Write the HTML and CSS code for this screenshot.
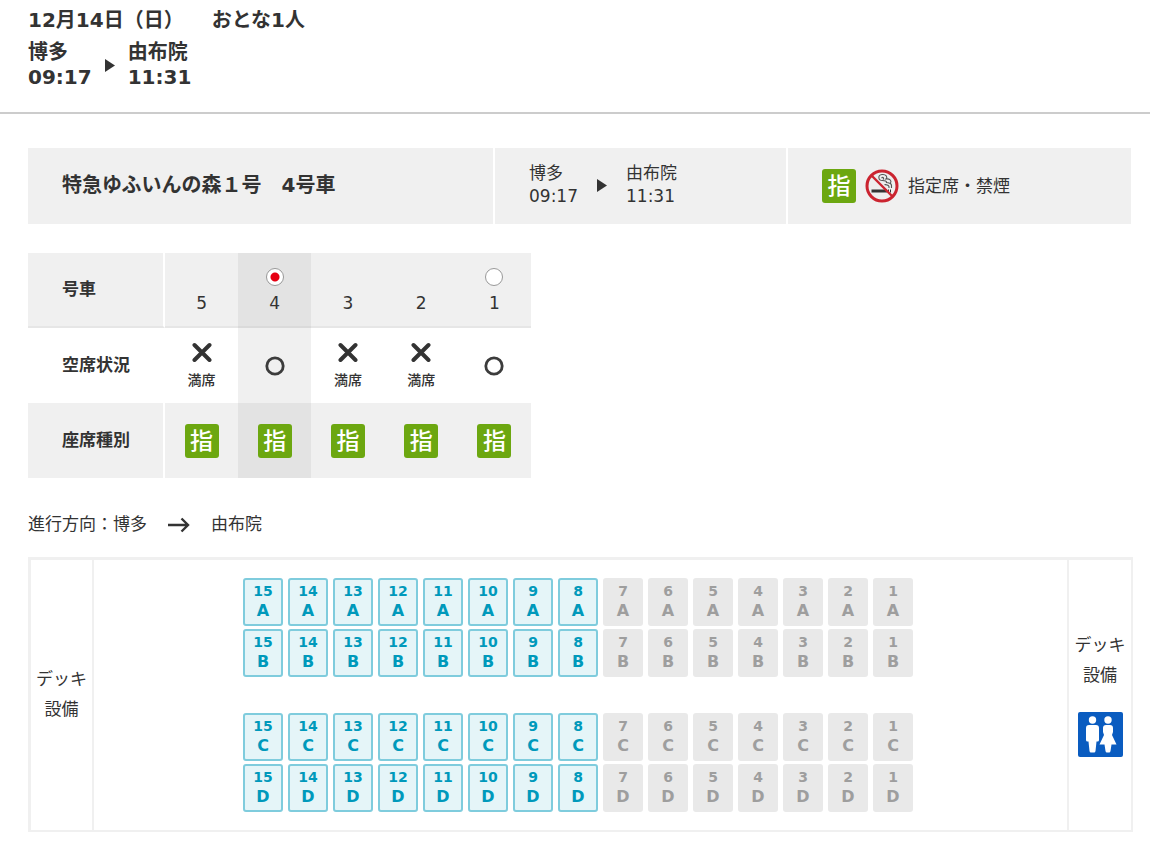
FILE: index.html
```
<!DOCTYPE html>
<html lang="ja">
<head>
  <meta charset="UTF-8">
  <meta name="viewport" content="width=device-width, initial-scale=1.0">
  <title>座席選択</title>
  <link rel="stylesheet" href="styles.css">
</head>
<body>
  <!-- shared icons -->
  <svg class="sprite" aria-hidden="true">
    <symbol id="tri" viewBox="0 0 10 13"><path d="M0 0L10 6.5L0 13Z" fill="#333"/></symbol>
    <symbol id="full" viewBox="0 0 20 20"><path d="M2.5 3L17.5 18M17.5 3L2.5 18" stroke="#333" stroke-width="4" stroke-linecap="round"/></symbol>
    <symbol id="free" viewBox="0 0 20 20"><circle cx="10" cy="10" r="8.2" fill="none" stroke="#3c3c3c" stroke-width="2.8"/></symbol>
  </svg>

  <header class="header">
    <div class="summary"><span>12月14日（日）</span><span>おとな1人</span></div>
    <div class="route">
      <div>博多<br>09:17</div>
      <svg class="tri"><use href="#tri"/></svg>
      <div>由布院<br>11:31</div>
    </div>
  </header>

  <main>
    <div class="train">
      <h2 class="train-name">特急ゆふいんの森１号　4号車</h2>
      <div class="route small">
        <div>博多<br>09:17</div>
        <svg class="tri"><use href="#tri"/></svg>
        <div>由布院<br>11:31</div>
      </div>
      <div class="train-type">
        <span class="badge">指</span>
        <svg class="nosmoking" viewBox="0 0 34 34" aria-hidden="true">
          <circle cx="17" cy="17" r="15" fill="#eeeeee"/>
          <path d="M6.5 20.5H22V23.5H6.5ZM23 20.5H24V23.5H23ZM25 20.5H26V23.5H25Z" fill="#333"/>
          <path d="M26.500 19V16.500C26.500 13.500 24 14 21.500 13.500C22 12 20 11.500 17.500 11.500C13 11.500 12.500 6 17 5.500C21 5 23 8 21 10C24.500 9.500 27 11.500 25.500 14" fill="none" stroke="#555" stroke-width="1.1"/>
          <path d="M24 19C24.500 16 22.500 16 19.500 15.500M16.500 9C18 7.500 19.500 9 18 10.500" fill="none" stroke="#555" stroke-width="1.1"/>
          <circle cx="17" cy="17" r="15" fill="none" stroke="#cb2430" stroke-width="3"/>
          <path d="M6.500 6.500L27.500 27.500" stroke="#cb2430" stroke-width="2.4"/>
        </svg>
        <span class="type-text">指定席・禁煙</span>
      </div>
    </div>

    <table class="cars">
      <tr>
        <th scope="row">号車</th>
        <td>5</td>
        <td class="current"><input type="radio" name="car" id="car4" checked><label for="car4">4</label></td>
        <td>3</td>
        <td>2</td>
        <td><input type="radio" name="car" id="car1"><label for="car1">1</label></td>
      </tr>
      <tr>
        <th scope="row">空席状況</th>
        <td><svg class="mark"><use href="#full"/></svg><span class="full">満席</span></td>
        <td class="current"><svg class="mark"><use href="#free"/></svg></td>
        <td><svg class="mark"><use href="#full"/></svg><span class="full">満席</span></td>
        <td><svg class="mark"><use href="#full"/></svg><span class="full">満席</span></td>
        <td><svg class="mark"><use href="#free"/></svg></td>
      </tr>
      <tr>
        <th scope="row">座席種別</th>
        <td><span class="badge">指</span></td>
        <td class="current"><span class="badge">指</span></td>
        <td><span class="badge">指</span></td>
        <td><span class="badge">指</span></td>
        <td><span class="badge">指</span></td>
      </tr>
    </table>

    <div class="direction">
      <span>進行方向：博多</span>
      <svg class="arrow" viewBox="0 0 22 16" aria-hidden="true"><path d="M0 8H20M13.5 1.5L20 8L13.5 14.5" fill="none" stroke="#333" stroke-width="2.4"/></svg>
      <span>由布院</span>
    </div>

    <div class="map">
      <div class="deck">デッキ<br>設備</div>
      <div class="seats" id="seats"></div>
      <div class="deck">
        デッキ<br>設備
        <svg class="toilet" viewBox="0 0 45 45" role="img" aria-label="トイレ">
          <rect width="45" height="45" rx="2" fill="#0a5cc0"/>
          <g fill="#fff">
            <circle cx="14.500" cy="8" r="3.700"/>
            <path d="M11 13H18Q21 13 21 16V28Q21 29.500 19.500 29.500H18.500L17.500 39Q17.300 40.500 16 40.500H13Q11.700 40.500 11.500 39L10.500 29.500H9.500Q8 29.500 8 28V16Q8 13 11 13Z"/>
            <circle cx="30" cy="8" r="3.700"/>
            <path d="M28 13H32Q35 13 35 16V20L34 23L38.500 32.500H33.500L32.500 39Q32.300 40.500 31 40.500H29Q27.700 40.500 27.500 39L26.500 32.500H21.500L26 23L25 20V16Q25 13 28 13Z"/>
          </g>
        </svg>
      </div>
    </div>
  </main>

  <script>
    const seats = document.getElementById('seats');
    // rows 8 to 15 are still available
    for (const letter of ['A', 'B', 'C', 'D']) {
      const row = document.createElement('div');
      row.className = letter === 'C' ? 'seat-row aisle' : 'seat-row';
      for (let n = 15; n >= 1; n--) {
        const seat = document.createElement('button');
        seat.type = 'button';
        seat.className = 'seat';
        seat.disabled = n < 8;
        seat.innerHTML = `<span class="num">${n}</span><span class="letter">${letter}</span>`;
        row.appendChild(seat);
      }
      seats.appendChild(row);
    }
  </script>
</body>
</html>
```

FILE: styles.css
```
* {
  box-sizing: border-box;
}
body {
  margin: 0;
  font-family: "DejaVu Sans", "Noto Sans CJK JP", sans-serif;
  font-size: 17px;
  color: #333;
  background: #fff;
}
.sprite {
  display: none;
}
.header {
  padding: 8px 28px 22px;
  border-bottom: 2px solid #ccc;
  font-size: 20px;
  line-height: 25px;
  font-weight: bold;
}
.summary {
  display: flex;
  gap: 28px;
  margin-bottom: 7px;
}
.route {
  display: flex;
  align-items: center;
  gap: 13px;
}
.tri {
  width: 10px;
  height: 13px;
}
main {
  padding: 34px 17px 12px 28px;
}

/* train info */
.train {
  display: grid;
  grid-template-columns: 465fr 291fr 343fr;
  gap: 2px;
  margin-right: 2px;
}
.train > * {
  display: flex;
  align-items: center;
  min-height: 76px;
  margin: 0;
  padding: 0 34px;
  background: #f0f0f0;
}
.train .train-name {
  padding-bottom: 2px;
  font-size: 20px;
  line-height: 25px;
}
.train .small {
  gap: 19px;
  padding-bottom: 2px;
  line-height: 23px;
}
.train-type {
  gap: 9px;
}
.type-text {
  padding-bottom: 4px;
}
.badge {
  display: inline-block;
  width: 34px;
  height: 34px;
  border-radius: 3px;
  background: #6ca710;
  color: #fff;
  font-size: 23px;
  font-weight: 500;
  line-height: 34px;
  text-align: center;
  vertical-align: middle;
}
.nosmoking {
  width: 34px;
  height: 34px;
}

/* car list */
.cars {
  width: 503px;
  margin-top: 29px;
  border-spacing: 0;
  table-layout: fixed;
  line-height: 22px;
}
.cars th {
  width: 137px;
  padding: 0 0 2px 34px;
  border-right: 2px solid #fff;
  text-align: left;
}
.cars td {
  height: 75px;
  padding: 0;
  text-align: center;
}
.cars th, .cars td {
  background: #f0f0f0;
  background-clip: padding-box;
}
.cars td.current {
  background: #e3e3e3;
}
.cars tr:nth-child(2) th, .cars tr:nth-child(2) td {
  background: #fff;
}
.cars tr:nth-child(2) td.current {
  background: #f0f0f0;
}
.cars tr:first-child th, .cars tr:first-child td {
  border-bottom: 2px solid #e6e6e6;
}
.cars tr:first-child td {
  padding-bottom: 12px;
  vertical-align: bottom;
}
.cars tr:first-child td.current {
  border-bottom-color: #dadada;
}
.cars label {
  display: block;
}
.cars input {
  appearance: none;
  display: block;
  width: 18px;
  height: 18px;
  margin: 0 auto 6px;
  border: 1px solid #999;
  border-radius: 50%;
  background: #fff;
}
.cars input:checked {
  background: radial-gradient(circle, #e60012 4px, #fff 5px);
}
.mark {
  display: block;
  width: 20px;
  height: 20px;
  margin: 0 auto;
}
.full {
  display: block;
  margin-top: 8px;
  font-size: 14px;
  font-weight: 500;
  line-height: 20px;
}

.direction {
  display: flex;
  align-items: center;
  gap: 21px;
  margin: 34px 0 20px;
  line-height: 25px;
}
.arrow {
  width: 22px;
  height: 16px;
}

/* seat map */
.map {
  display: flex;
  border: 2px solid #f0f0f0;
  border-width: 3px 2px 2px 3px;
}
.deck {
  display: flex;
  flex: none;
  flex-direction: column;
  justify-content: center;
  width: 63px;
  padding-bottom: 3px;
  line-height: 30px;
  text-align: center;
}
.deck:first-child {
  border-right: 2px solid #f0f0f0;
}
.deck:last-child {
  width: 64px;
  border-left: 2px solid #f0f0f0;
}
.toilet {
  width: 45px;
  height: 45px;
  margin: 22px auto 0;
}
.seats {
  flex: 1;
  padding: 18px 0;
}
.seat-row {
  display: flex;
  justify-content: center;
  margin-bottom: 3px;
}
.seat-row:last-child {
  margin-bottom: 0;
}
.aisle {
  margin-top: 36px;
}
.seat {
  width: 40px;
  height: 48px;
  margin: 0 5px 0 0;
  padding: 0 0 3px;
  border: 2px solid #7fccdd;
  border-radius: 3px;
  background: #e5f5f8;
  color: #0099bb;
  font-family: inherit;
  font-weight: bold;
  cursor: pointer;
}
.seat:disabled {
  border-color: #e9e9e9;
  background: #e9e9e9;
  color: #9e9e9e;
  cursor: default;
}
.num, .letter {
  display: block;
  font-size: 14px;
  line-height: 20px;
}
.letter {
  font-size: 16px;
}
```
